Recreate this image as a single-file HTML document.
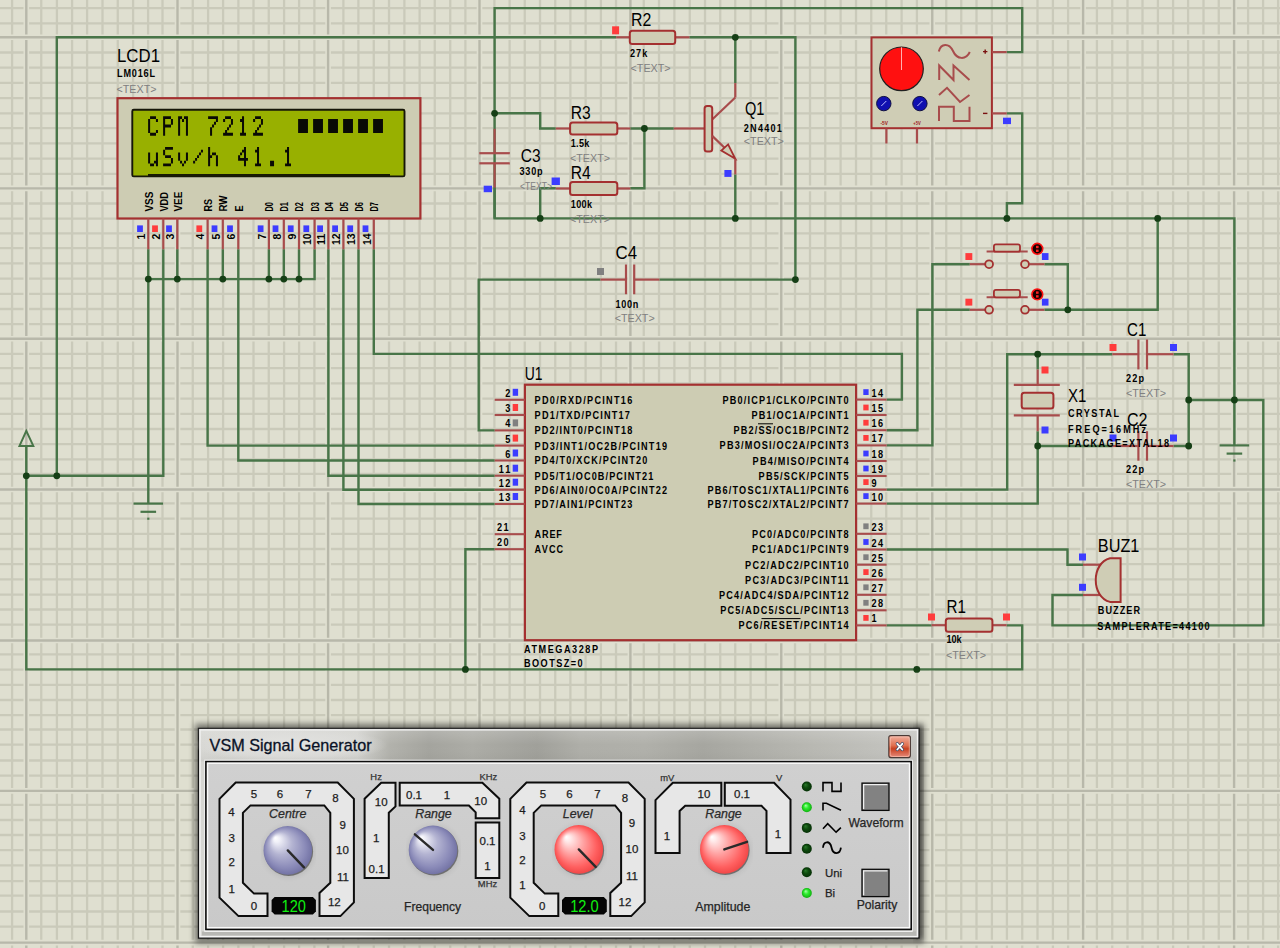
<!DOCTYPE html><html><head><meta charset="utf-8"><title>Proteus schematic</title><style>html,body{margin:0;padding:0;background:#dfdfd0;}body{width:1280px;height:948px;overflow:hidden;}svg{display:block;font-family:"Liberation Sans", sans-serif;}</style></head><body>
<svg width="1280" height="948" viewBox="0 0 1280 948">
<rect width="1280" height="948" fill="#dfdfd0"/>
<path d="M12.1,0V948M41.25,0V948M56.9,0V948M72.1,0V948M87.1,0V948M102.5,0V948M117.75,0V948M133.1,0V948M148.1,0V948M162.5,0V948M192.75,0V948M208.1,0V948M223.1,0V948M238.4,0V948M253.5,0V948M268.75,0V948M284.1,0V948M299.1,0V948M314.4,0V948M343.4,0V948M358.4,0V948M373.75,0V948M389,0V948M404.4,0V948M419.6,0V948M434.75,0V948M450.25,0V948M465.4,0V948M494.4,0V948M509.6,0V948M524.75,0V948M540,0V948M555.25,0V948M570.4,0V948M585.6,0V948M600.9,0V948M616,0V948M643.75,0V948M659,0V948M674.4,0V948M689.75,0V948M705,0V948M720.25,0V948M735.25,0V948M750.6,0V948M765.9,0V948M795,0V948M810,0V948M825.25,0V948M840.6,0V948M856,0V948M871.25,0V948M886.25,0V948M901.6,0V948M916.9,0V948M946.25,0V948M961.25,0V948M976.5,0V948M991.9,0V948M1006.9,0V948M1022.25,0V948M1037.5,0V948M1052.9,0V948M1068.1,0V948M1096.9,0V948M1112.25,0V948M1127.5,0V948M1142.5,0V948M1157.9,0V948M1173.1,0V948M1188.1,0V948M1203.5,0V948M1218.75,0V948M1248.1,0V948M1263.1,0V948M1278.1,0V948M0,8.2H1280M0,23.4H1280M0,52.5H1280M0,67.7H1280M0,82.9H1280M0,98.1H1280M0,113.3H1280M0,128.2H1280M0,143.4H1280M0,158.6H1280M0,173.8H1280M0,203.5H1280M0,218.7H1280M0,233.3H1280M0,248.2H1280M0,263.4H1280M0,278.6H1280M0,293.8H1280M0,309H1280M0,324.2H1280M0,353.9H1280M0,368.2H1280M0,383.4H1280M0,398.6H1280M0,413.8H1280M0,429H1280M0,444.2H1280M0,459.4H1280M0,473.9H1280M0,503.4H1280M0,518.6H1280M0,533.8H1280M0,549H1280M0,564.2H1280M0,579.4H1280M0,594.6H1280M0,609.5H1280M0,624.7H1280M0,654.4H1280M0,669.6H1280M0,684.8H1280M0,700H1280M0,715.2H1280M0,729.5H1280M0,744.7H1280M0,760.5H1280M0,775.7H1280M0,804.8H1280M0,820H1280M0,835H1280M0,850.2H1280M0,865.3H1280M0,881.2H1280M0,895.7H1280M0,911.5H1280M0,926.7H1280" stroke="#cacaba" stroke-width="2.3" fill="none"/>
<path d="M26.3,0V948M177.5,0V948M328.1,0V948M479.5,0V948M630.4,0V948M781.25,0V948M932.25,0V948M1083.1,0V948M1234.1,0V948" stroke="#dfdfd0" stroke-width="5.6" fill="none"/>
<path d="M26.3,0V948M177.5,0V948M328.1,0V948M479.5,0V948M630.4,0V948M781.25,0V948M932.25,0V948M1083.1,0V948M1234.1,0V948" stroke="#b8b8aa" stroke-width="2.4" fill="none"/>
<path d="M0,37.3H1280M0,188.4H1280M0,338.7H1280M0,489.5H1280M0,640.5H1280M0,790.9H1280M0,942.6H1280" stroke="#dfdfd0" stroke-width="5.6" fill="none"/>
<path d="M0,37.3H1280M0,188.4H1280M0,338.7H1280M0,489.5H1280M0,640.5H1280M0,790.9H1280M0,942.6H1280" stroke="#b8b8aa" stroke-width="2.4" fill="none"/>
<polyline points="494.6,218.4 494.6,8.1 1022.2,8.1 1022.2,52.1 1006.7,52.1" fill="none" stroke="#487548" stroke-width="2.4" stroke-linejoin="miter"/>
<polyline points="56.8,475.8 56.8,37.3 616.2,37.3" fill="none" stroke="#487548" stroke-width="2.4" stroke-linejoin="miter"/>
<polyline points="689.4,37.3 795.4,37.3 795.4,279.6" fill="none" stroke="#487548" stroke-width="2.4" stroke-linejoin="miter"/>
<polyline points="735.3,37.3 735.3,83.1" fill="none" stroke="#487548" stroke-width="2.4" stroke-linejoin="miter"/>
<polyline points="494.6,113.3 540.2,113.3 540.2,128.5 555.8,128.5" fill="none" stroke="#487548" stroke-width="2.4" stroke-linejoin="miter"/>
<polyline points="630.3,128.5 673.8,128.5" fill="none" stroke="#487548" stroke-width="2.4" stroke-linejoin="miter"/>
<polyline points="644.4,128.5 644.4,188.2 630.3,188.2" fill="none" stroke="#487548" stroke-width="2.4" stroke-linejoin="miter"/>
<polyline points="555.8,188.2 540.2,188.2 540.2,218.4" fill="none" stroke="#487548" stroke-width="2.4" stroke-linejoin="miter"/>
<polyline points="735.3,174.4 735.3,218.4" fill="none" stroke="#487548" stroke-width="2.4" stroke-linejoin="miter"/>
<polyline points="494.6,187.6 494.6,218.4 1234.4,218.4 1234.4,445.4" fill="none" stroke="#487548" stroke-width="2.4" stroke-linejoin="miter"/>
<polyline points="1006.7,113.4 1022.2,113.4 1022.2,203.2 1006.9,203.2 1006.9,218.4" fill="none" stroke="#487548" stroke-width="2.4" stroke-linejoin="miter"/>
<polyline points="1157.7,218.4 1157.7,309.8 1044.4,309.8" fill="none" stroke="#487548" stroke-width="2.4" stroke-linejoin="miter"/>
<polyline points="1044.4,264.2 1067.8,264.2 1067.8,309.8" fill="none" stroke="#487548" stroke-width="2.4" stroke-linejoin="miter"/>
<polyline points="969.8,264.2 932.4,264.2 932.4,445.4 886.6,445.4" fill="none" stroke="#487548" stroke-width="2.4" stroke-linejoin="miter"/>
<polyline points="969.8,309.8 917.4,309.8 917.4,430.2 886.6,430.2" fill="none" stroke="#487548" stroke-width="2.4" stroke-linejoin="miter"/>
<polyline points="373.8,249.2 373.8,353.9 901.9,353.9 901.9,399.6 886.6,399.6" fill="none" stroke="#487548" stroke-width="2.4" stroke-linejoin="miter"/>
<polyline points="494.7,430.4 478.7,430.4 478.7,279.6 600.5,279.6" fill="none" stroke="#487548" stroke-width="2.4" stroke-linejoin="miter"/>
<polyline points="659.4,279.6 795.4,279.6" fill="none" stroke="#487548" stroke-width="2.4" stroke-linejoin="miter"/>
<polyline points="148.3,249.2 148.3,503.6" fill="none" stroke="#487548" stroke-width="2.4" stroke-linejoin="miter"/>
<polyline points="163.3,249.2 163.3,475.8 26.3,475.8" fill="none" stroke="#487548" stroke-width="2.4" stroke-linejoin="miter"/>
<polyline points="26.3,446 26.3,669.4 1022.2,669.4 1022.2,625.4 1006.6,625.4" fill="none" stroke="#487548" stroke-width="2.4" stroke-linejoin="miter"/>
<polyline points="177.3,249.2 177.3,279.1" fill="none" stroke="#487548" stroke-width="2.4" stroke-linejoin="miter"/>
<polyline points="148.3,279.1 314.6,279.1 314.6,249.2" fill="none" stroke="#487548" stroke-width="2.4" stroke-linejoin="miter"/>
<polyline points="207.6,249.2 207.6,445.6 494.7,445.6" fill="none" stroke="#487548" stroke-width="2.4" stroke-linejoin="miter"/>
<polyline points="222.8,249.2 222.8,279.1" fill="none" stroke="#487548" stroke-width="2.4" stroke-linejoin="miter"/>
<polyline points="238.3,249.2 238.3,460.5 494.7,460.5" fill="none" stroke="#487548" stroke-width="2.4" stroke-linejoin="miter"/>
<polyline points="268.9,249.2 268.9,279.1" fill="none" stroke="#487548" stroke-width="2.4" stroke-linejoin="miter"/>
<polyline points="283.8,249.2 283.8,279.1" fill="none" stroke="#487548" stroke-width="2.4" stroke-linejoin="miter"/>
<polyline points="299,249.2 299,279.1" fill="none" stroke="#487548" stroke-width="2.4" stroke-linejoin="miter"/>
<polyline points="328.4,249.2 328.4,475.7 494.7,475.7" fill="none" stroke="#487548" stroke-width="2.4" stroke-linejoin="miter"/>
<polyline points="343.4,249.2 343.4,489.7 494.7,489.7" fill="none" stroke="#487548" stroke-width="2.4" stroke-linejoin="miter"/>
<polyline points="358.5,249.2 358.5,504 494.7,504" fill="none" stroke="#487548" stroke-width="2.4" stroke-linejoin="miter"/>
<polyline points="494.7,549.2 465.4,549.2 465.4,669.4" fill="none" stroke="#487548" stroke-width="2.4" stroke-linejoin="miter"/>
<polyline points="886.6,489.6 1007.2,489.6 1007.2,354.2 1112.3,354.2" fill="none" stroke="#487548" stroke-width="2.4" stroke-linejoin="miter"/>
<polyline points="886.6,503.6 1037.7,503.6 1037.7,431.2" fill="none" stroke="#487548" stroke-width="2.4" stroke-linejoin="miter"/>
<polyline points="1037.7,354.2 1037.7,369.4" fill="none" stroke="#487548" stroke-width="2.4" stroke-linejoin="miter"/>
<polyline points="1037.7,446 1112.3,446" fill="none" stroke="#487548" stroke-width="2.4" stroke-linejoin="miter"/>
<polyline points="1173.5,354.2 1188.7,354.2 1188.7,446 1173.5,446" fill="none" stroke="#487548" stroke-width="2.4" stroke-linejoin="miter"/>
<polyline points="1188.7,400 1263.3,400 1263.3,625.4 1052.5,625.4 1052.5,595 1083,595" fill="none" stroke="#487548" stroke-width="2.4" stroke-linejoin="miter"/>
<polyline points="886.6,549.5 1067.5,549.5 1067.5,564.7 1083,564.7" fill="none" stroke="#487548" stroke-width="2.4" stroke-linejoin="miter"/>
<polyline points="886.6,625.4 931.6,625.4" fill="none" stroke="#487548" stroke-width="2.4" stroke-linejoin="miter"/>
<circle cx="735.3" cy="37.3" r="3.4" fill="#163f16"/>
<circle cx="494.6" cy="113.3" r="3.4" fill="#163f16"/>
<circle cx="644.4" cy="128.5" r="3.4" fill="#163f16"/>
<circle cx="540.2" cy="218.4" r="3.4" fill="#163f16"/>
<circle cx="735.3" cy="218.4" r="3.4" fill="#163f16"/>
<circle cx="795.4" cy="279.6" r="3.4" fill="#163f16"/>
<circle cx="1006.9" cy="218.4" r="3.4" fill="#163f16"/>
<circle cx="1157.7" cy="218.4" r="3.4" fill="#163f16"/>
<circle cx="1067.8" cy="309.8" r="3.4" fill="#163f16"/>
<circle cx="148.3" cy="279.1" r="3.4" fill="#163f16"/>
<circle cx="177.3" cy="279.1" r="3.4" fill="#163f16"/>
<circle cx="222.8" cy="279.1" r="3.4" fill="#163f16"/>
<circle cx="268.9" cy="279.1" r="3.4" fill="#163f16"/>
<circle cx="283.8" cy="279.1" r="3.4" fill="#163f16"/>
<circle cx="299" cy="279.1" r="3.4" fill="#163f16"/>
<circle cx="26.3" cy="475.8" r="3.4" fill="#163f16"/>
<circle cx="56.8" cy="475.8" r="3.4" fill="#163f16"/>
<circle cx="465.4" cy="669.4" r="3.4" fill="#163f16"/>
<circle cx="916.8" cy="669.4" r="3.4" fill="#163f16"/>
<circle cx="1037.7" cy="354.2" r="3.4" fill="#163f16"/>
<circle cx="1037.7" cy="446" r="3.4" fill="#163f16"/>
<circle cx="1188.7" cy="400" r="3.4" fill="#163f16"/>
<circle cx="1188.7" cy="446" r="3.4" fill="#163f16"/>
<circle cx="1234.4" cy="400" r="3.4" fill="#163f16"/>
<line x1="616.2" y1="37.3" x2="629.8" y2="37.3" stroke="#a84c4c" stroke-width="2.2"/>
<line x1="675.2" y1="37.3" x2="689.4" y2="37.3" stroke="#a84c4c" stroke-width="2.2"/>
<rect x="629.8" y="30.7" width="45.4" height="13.2" rx="2.5" fill="#cfcdb5" stroke="#a43030" stroke-width="2"/>
<line x1="555.8" y1="128.5" x2="570.1" y2="128.5" stroke="#a84c4c" stroke-width="2.2"/>
<line x1="617.3" y1="128.5" x2="630.3" y2="128.5" stroke="#a84c4c" stroke-width="2.2"/>
<rect x="570.1" y="122.6" width="47.2" height="11.8" rx="2.5" fill="#cfcdb5" stroke="#a43030" stroke-width="2"/>
<line x1="555.8" y1="188.5" x2="570.1" y2="188.5" stroke="#a84c4c" stroke-width="2.2"/>
<line x1="617.3" y1="188.5" x2="630.3" y2="188.5" stroke="#a84c4c" stroke-width="2.2"/>
<rect x="570.1" y="182.1" width="47.2" height="12.8" rx="2.5" fill="#cfcdb5" stroke="#a43030" stroke-width="2"/>
<line x1="931.6" y1="625.2" x2="945.8" y2="625.2" stroke="#a84c4c" stroke-width="2.2"/>
<line x1="992.4" y1="625.2" x2="1006.6" y2="625.2" stroke="#a84c4c" stroke-width="2.2"/>
<rect x="945.8" y="618.6" width="46.6" height="13.2" rx="2.5" fill="#cfcdb5" stroke="#a43030" stroke-width="2"/>
<line x1="494.6" y1="128.8" x2="494.6" y2="153.2" stroke="#a84c4c" stroke-width="2.2"/>
<line x1="494.6" y1="163.3" x2="494.6" y2="187.6" stroke="#a84c4c" stroke-width="2.2"/>
<line x1="479.3" y1="153.2" x2="509.8" y2="153.2" stroke="#a84c4c" stroke-width="2.2"/>
<line x1="479.3" y1="163.3" x2="509.8" y2="163.3" stroke="#a84c4c" stroke-width="2.2"/>
<line x1="600.5" y1="279.6" x2="626" y2="279.6" stroke="#a84c4c" stroke-width="2.2"/>
<line x1="634.2" y1="279.6" x2="659.4" y2="279.6" stroke="#a84c4c" stroke-width="2.2"/>
<line x1="626" y1="264.5" x2="626" y2="294.2" stroke="#a84c4c" stroke-width="2.2"/>
<line x1="634.2" y1="264.5" x2="634.2" y2="294.2" stroke="#a84c4c" stroke-width="2.2"/>
<line x1="1112.3" y1="354.2" x2="1138.4" y2="354.2" stroke="#a84c4c" stroke-width="2.2"/>
<line x1="1147" y1="354.2" x2="1173.5" y2="354.2" stroke="#a84c4c" stroke-width="2.2"/>
<line x1="1138.4" y1="339.5" x2="1138.4" y2="369.4" stroke="#a84c4c" stroke-width="2.2"/>
<line x1="1147" y1="339.5" x2="1147" y2="369.4" stroke="#a84c4c" stroke-width="2.2"/>
<line x1="1112.3" y1="446" x2="1138.4" y2="446" stroke="#a84c4c" stroke-width="2.2"/>
<line x1="1147" y1="446" x2="1173.5" y2="446" stroke="#a84c4c" stroke-width="2.2"/>
<line x1="1138.4" y1="431.2" x2="1138.4" y2="460.7" stroke="#a84c4c" stroke-width="2.2"/>
<line x1="1147" y1="431.2" x2="1147" y2="460.7" stroke="#a84c4c" stroke-width="2.2"/>
<line x1="1037.7" y1="369.4" x2="1037.7" y2="384.8" stroke="#a84c4c" stroke-width="2.2"/>
<line x1="1013.8" y1="384.8" x2="1059.8" y2="384.8" stroke="#a84c4c" stroke-width="2.2"/>
<rect x="1021.7" y="392.7" width="31.7" height="15.8" rx="2.5" fill="#cfcdb5" stroke="#a43030" stroke-width="2"/>
<line x1="1013.8" y1="415.3" x2="1059.8" y2="415.3" stroke="#a84c4c" stroke-width="2.2"/>
<line x1="1037.7" y1="415.3" x2="1037.7" y2="431.2" stroke="#a84c4c" stroke-width="2.2"/>
<line x1="735.3" y1="83.1" x2="735.3" y2="97.5" stroke="#a84c4c" stroke-width="2.2"/>
<line x1="735.3" y1="97.5" x2="711.9" y2="119.8" stroke="#a84c4c" stroke-width="2.2"/>
<line x1="673.8" y1="128.5" x2="704.6" y2="128.5" stroke="#a84c4c" stroke-width="2.2"/>
<rect x="704.6" y="106" width="7.6" height="45.5" rx="2.5" fill="#cfcdb5" stroke="#a43030" stroke-width="2"/>
<line x1="712.2" y1="135.9" x2="730.5" y2="153.5" stroke="#a84c4c" stroke-width="2.2"/>
<polygon points="735.3,158.8 721.3,150.6 728.1,144.4" fill="#cfcdb5" stroke="#a43030" stroke-width="1.8" stroke-linejoin="miter"/>
<line x1="735.3" y1="158.8" x2="735.3" y2="174.4" stroke="#a84c4c" stroke-width="2.2"/>
<line x1="969.8" y1="264.2" x2="985" y2="264.2" stroke="#a84c4c" stroke-width="2.2"/>
<line x1="1029.2" y1="264.2" x2="1044.4" y2="264.2" stroke="#a84c4c" stroke-width="2.2"/>
<circle cx="989.1" cy="264.2" r="3.9" fill="#cfcdb5" stroke="#a43030" stroke-width="1.8"/>
<circle cx="1025.0" cy="264.2" r="3.9" fill="#cfcdb5" stroke="#a43030" stroke-width="1.8"/>
<line x1="986.6" y1="251.6" x2="1027.7" y2="251.6" stroke="#a84c4c" stroke-width="2"/>
<rect x="993.9" y="244.3" width="26.1" height="7.4" rx="2" fill="#cfcdb5" stroke="#a43030" stroke-width="1.8"/>
<circle cx="1037.3" cy="248.8" r="5.4" fill="#1a0000" stroke="#ff1010" stroke-width="1.6"/>
<rect x="1036" y="245.8" width="2.6" height="2.4" fill="#ff2020"/>
<rect x="1036" y="249.6" width="2.6" height="2.4" fill="#ff2020"/>
<line x1="969.8" y1="309.8" x2="985" y2="309.8" stroke="#a84c4c" stroke-width="2.2"/>
<line x1="1029.2" y1="309.8" x2="1044.4" y2="309.8" stroke="#a84c4c" stroke-width="2.2"/>
<circle cx="989.1" cy="309.8" r="3.9" fill="#cfcdb5" stroke="#a43030" stroke-width="1.8"/>
<circle cx="1025.0" cy="309.8" r="3.9" fill="#cfcdb5" stroke="#a43030" stroke-width="1.8"/>
<line x1="986.6" y1="297.2" x2="1027.7" y2="297.2" stroke="#a84c4c" stroke-width="2"/>
<rect x="993.9" y="289.9" width="26.1" height="7.4" rx="2" fill="#cfcdb5" stroke="#a43030" stroke-width="1.8"/>
<circle cx="1037.3" cy="294.4" r="5.4" fill="#1a0000" stroke="#ff1010" stroke-width="1.6"/>
<rect x="1036" y="291.4" width="2.6" height="2.4" fill="#ff2020"/>
<rect x="1036" y="295.2" width="2.6" height="2.4" fill="#ff2020"/>
<line x1="133.5" y1="503.6" x2="163.1" y2="503.6" stroke="#487548" stroke-width="2.2"/>
<line x1="140.5" y1="511.8" x2="156.1" y2="511.8" stroke="#487548" stroke-width="2.2"/>
<rect x="147.2" y="517.6" width="2.2" height="2.2" fill="#487548"/>
<line x1="1219.6" y1="445.4" x2="1249.2" y2="445.4" stroke="#487548" stroke-width="2.2"/>
<line x1="1226.6" y1="453.6" x2="1242.2" y2="453.6" stroke="#487548" stroke-width="2.2"/>
<rect x="1233.3" y="459.4" width="2.2" height="2.2" fill="#487548"/>
<polygon points="26.3,430.8 19.5,445.9 33.3,445.9" fill="none" stroke="#487548" stroke-width="2"/>
<rect x="871.5" y="37.4" width="120.4" height="90.8" fill="#cfcdb5" stroke="#a43030" stroke-width="2"/>
<line x1="992" y1="52.1" x2="1006.7" y2="52.1" stroke="#a84c4c" stroke-width="2.2"/>
<line x1="992" y1="113.4" x2="1006.7" y2="113.4" stroke="#a84c4c" stroke-width="2.2"/>
<line x1="886.4" y1="128.6" x2="886.4" y2="143.5" stroke="#a84c4c" stroke-width="2.2"/>
<line x1="917" y1="128.6" x2="917" y2="143.5" stroke="#a84c4c" stroke-width="2.2"/>
<circle cx="901.5" cy="68.8" r="21.8" fill="#ff1010" stroke="#202020" stroke-width="1.2"/>
<line x1="901.5" y1="47.3" x2="901.5" y2="70" stroke="#ffb0b0" stroke-width="1"/>
<circle cx="883.8" cy="103.6" r="7.2" fill="#1010b0" stroke="#101040" stroke-width="1"/>
<line x1="881.3" y1="106" x2="886.3" y2="101" stroke="#c0c0ff" stroke-width="1"/>
<circle cx="919.9" cy="103.6" r="7.2" fill="#1010b0" stroke="#101040" stroke-width="1"/>
<line x1="917.4" y1="106" x2="922.4" y2="101" stroke="#c0c0ff" stroke-width="1"/>
<path d="M938.8,51.5 C941,43 949,43 953,51 C957,60 966,60 969.8,52" fill="none" stroke="#a84c4c" stroke-width="2"/>
<path d="M939.2,80 L939.2,65.5 L953.5,80 L953.5,65.5 L969.5,80" fill="none" stroke="#a84c4c" stroke-width="2"/>
<path d="M939,95 L947,87.8 L960,102 L969.5,95" fill="none" stroke="#a84c4c" stroke-width="2"/>
<path d="M939,121 L939,106.8 L953.8,106.8 L953.8,121 L969.5,121 L969.5,106.8" fill="none" stroke="#a84c4c" stroke-width="2"/>
<path d="M983,51.6 h4.4 M985.2,49.4 v4.4" stroke="#7a1010" stroke-width="1.4"/>
<path d="M983,113.4 h4.4" stroke="#7a1010" stroke-width="1.4"/>
<text x="884.2" y="124.5" font-size="6" fill="#a02020" font-weight="bold" text-anchor="middle" textLength="7.5" lengthAdjust="spacingAndGlyphs">-5V</text>
<text x="917" y="124.5" font-size="6" fill="#a02020" font-weight="bold" text-anchor="middle" textLength="7.5" lengthAdjust="spacingAndGlyphs">+5V</text>
<line x1="1083" y1="564.7" x2="1101.9" y2="564.7" stroke="#a84c4c" stroke-width="2.2"/>
<line x1="1083" y1="595" x2="1101.9" y2="595" stroke="#a84c4c" stroke-width="2.2"/>
<path d="M1120.6,558.2 L1120.6,601.9 L1110,601.9 C1091,597 1091,563 1110,558.2 Z" fill="#cfcdb5" stroke="#a43030" stroke-width="2"/>
<text x="631" y="26.2" font-size="18.6" fill="#000" font-weight="normal" text-anchor="start" textLength="20.3" lengthAdjust="spacingAndGlyphs">R2</text>
<text transform="translate(630,57.1) scale(0.86,1)" font-size="10.6" font-weight="bold" fill="#000" text-anchor="start" textLength="20.12" lengthAdjust="spacing">27k</text>
<text x="630.6" y="71.9" font-size="11" fill="#808080" font-weight="normal" text-anchor="start" textLength="40" lengthAdjust="spacingAndGlyphs">&lt;TEXT&gt;</text>
<rect x="612.1" y="26.3" width="7" height="8" fill="#ff3c3c"/>
<text x="570.8" y="119.1" font-size="18.6" fill="#000" font-weight="normal" text-anchor="start" textLength="20" lengthAdjust="spacingAndGlyphs">R3</text>
<text transform="translate(570.8,146.7) scale(0.86,1)" font-size="10.6" font-weight="bold" fill="#000" text-anchor="start" textLength="21.51" lengthAdjust="spacing">1.5k</text>
<text x="570" y="162.3" font-size="11" fill="#808080" font-weight="normal" text-anchor="start" textLength="40" lengthAdjust="spacingAndGlyphs">&lt;TEXT&gt;</text>
<text x="570.8" y="178.6" font-size="18.6" fill="#000" font-weight="normal" text-anchor="start" textLength="20" lengthAdjust="spacingAndGlyphs">R4</text>
<text transform="translate(570.8,207.8) scale(0.86,1)" font-size="10.6" font-weight="bold" fill="#000" text-anchor="start" textLength="24.65" lengthAdjust="spacing">100k</text>
<text x="570" y="222.7" font-size="11" fill="#808080" font-weight="normal" text-anchor="start" textLength="40" lengthAdjust="spacingAndGlyphs">&lt;TEXT&gt;</text>
<rect x="551.6" y="177.5" width="8.3" height="7.5" fill="#3c3cff"/>
<text x="520.8" y="161.6" font-size="18.6" fill="#000" font-weight="normal" text-anchor="start" textLength="19.8" lengthAdjust="spacingAndGlyphs">C3</text>
<text transform="translate(519.4,174.9) scale(0.86,1)" font-size="10.6" font-weight="bold" fill="#000" text-anchor="start" textLength="27.09" lengthAdjust="spacing">330p</text>
<text x="520" y="190.4" font-size="11" fill="#808080" font-weight="normal" text-anchor="start" textLength="32" lengthAdjust="spacingAndGlyphs">&lt;TEXT&gt;</text>
<rect x="483.7" y="185.7" width="8.3" height="6.5" fill="#3c3cff"/>
<text x="745" y="114.9" font-size="18.6" fill="#000" font-weight="normal" text-anchor="start" textLength="19.4" lengthAdjust="spacingAndGlyphs">Q1</text>
<text transform="translate(743.8,131.5) scale(0.86,1)" font-size="10.6" font-weight="bold" fill="#000" text-anchor="start" textLength="44.3" lengthAdjust="spacing">2N4401</text>
<text x="743.8" y="145" font-size="11" fill="#808080" font-weight="normal" text-anchor="start" textLength="40" lengthAdjust="spacingAndGlyphs">&lt;TEXT&gt;</text>
<rect x="724.4" y="170" width="7.1" height="6.9" fill="#3c3cff"/>
<text x="615.5" y="259" font-size="18.6" fill="#000" font-weight="normal" text-anchor="start" textLength="21.5" lengthAdjust="spacingAndGlyphs">C4</text>
<text transform="translate(615.5,307.7) scale(0.86,1)" font-size="10.6" font-weight="bold" fill="#000" text-anchor="start" textLength="26.51" lengthAdjust="spacing">100n</text>
<text x="614.7" y="322.1" font-size="11" fill="#808080" font-weight="normal" text-anchor="start" textLength="40" lengthAdjust="spacingAndGlyphs">&lt;TEXT&gt;</text>
<rect x="597" y="268" width="7" height="7" fill="#808080"/>
<text x="524.7" y="379.6" font-size="18.6" fill="#000" font-weight="normal" text-anchor="start" textLength="17.8" lengthAdjust="spacingAndGlyphs">U1</text>
<text transform="translate(524,652.5) scale(0.86,1)" font-size="10.6" font-weight="bold" fill="#000" text-anchor="start" textLength="86.05" lengthAdjust="spacing">ATMEGA328P</text>
<text transform="translate(524,667.3) scale(0.86,1)" font-size="10.6" font-weight="bold" fill="#000" text-anchor="start" textLength="68.14" lengthAdjust="spacing">BOOTSZ=0</text>
<text x="117" y="62.2" font-size="18.6" fill="#000" font-weight="normal" text-anchor="start" textLength="43" lengthAdjust="spacingAndGlyphs">LCD1</text>
<text transform="translate(117,77.3) scale(0.86,1)" font-size="10.6" font-weight="bold" fill="#000" text-anchor="start" textLength="44.19" lengthAdjust="spacing">LM016L</text>
<text x="116.5" y="92.9" font-size="11" fill="#808080" font-weight="normal" text-anchor="start" textLength="40" lengthAdjust="spacingAndGlyphs">&lt;TEXT&gt;</text>
<text x="1127" y="336.1" font-size="18.6" fill="#000" font-weight="normal" text-anchor="start" textLength="19.3" lengthAdjust="spacingAndGlyphs">C1</text>
<text transform="translate(1126,382.3) scale(0.86,1)" font-size="10.6" font-weight="bold" fill="#000" text-anchor="start" textLength="20.93" lengthAdjust="spacing">22p</text>
<text x="1126" y="397.4" font-size="11" fill="#808080" font-weight="normal" text-anchor="start" textLength="40" lengthAdjust="spacingAndGlyphs">&lt;TEXT&gt;</text>
<rect x="1109.5" y="344" width="7" height="7" fill="#ff3c3c"/>
<rect x="1170" y="344" width="7" height="7" fill="#3c3cff"/>
<text x="1127" y="425.6" font-size="18.6" fill="#000" font-weight="normal" text-anchor="start" textLength="20.5" lengthAdjust="spacingAndGlyphs">C2</text>
<text transform="translate(1126,472.7) scale(0.86,1)" font-size="10.6" font-weight="bold" fill="#000" text-anchor="start" textLength="20.93" lengthAdjust="spacing">22p</text>
<text x="1126" y="488.1" font-size="11" fill="#808080" font-weight="normal" text-anchor="start" textLength="40" lengthAdjust="spacingAndGlyphs">&lt;TEXT&gt;</text>
<rect x="1109.5" y="434.5" width="7" height="7" fill="#3c3cff"/>
<rect x="1170" y="434.5" width="7" height="7" fill="#3c3cff"/>
<text x="1068" y="401.6" font-size="18.6" fill="#000" font-weight="normal" text-anchor="start" textLength="18.3" lengthAdjust="spacingAndGlyphs">X1</text>
<text transform="translate(1068,417.4) scale(0.86,1)" font-size="10.6" font-weight="bold" fill="#000" text-anchor="start" textLength="59.3" lengthAdjust="spacing">CRYSTAL</text>
<text transform="translate(1068,433.2) scale(0.86,1)" font-size="10.6" font-weight="bold" fill="#000" text-anchor="start" textLength="90.7" lengthAdjust="spacing">FREQ=16MHz</text>
<text transform="translate(1068,446.7) scale(0.86,1)" font-size="10.6" font-weight="bold" fill="#000" text-anchor="start" textLength="117.44" lengthAdjust="spacing">PACKAGE=XTAL18</text>
<rect x="1041.5" y="366.5" width="7" height="7" fill="#ff3c3c"/>
<rect x="1041.5" y="426.5" width="7" height="7" fill="#3c3cff"/>
<text x="1097.8" y="552.4" font-size="18.6" fill="#000" font-weight="normal" text-anchor="start" textLength="41.6" lengthAdjust="spacingAndGlyphs">BUZ1</text>
<text transform="translate(1097.8,614.3) scale(0.86,1)" font-size="10.6" font-weight="bold" fill="#000" text-anchor="start" textLength="49.07" lengthAdjust="spacing">BUZZER</text>
<text transform="translate(1097.2,629.7) scale(0.86,1)" font-size="10.6" font-weight="bold" fill="#000" text-anchor="start" textLength="130.81" lengthAdjust="spacing">SAMPLERATE=44100</text>
<rect x="1079" y="553.5" width="7" height="7" fill="#3c3cff"/>
<rect x="1079" y="583.8" width="7" height="7" fill="#3c3cff"/>
<text x="946.6" y="613.3" font-size="18.6" fill="#000" font-weight="normal" text-anchor="start" textLength="19.4" lengthAdjust="spacingAndGlyphs">R1</text>
<text transform="translate(946.6,643.3) scale(0.86,1)" font-size="10.6" font-weight="bold" fill="#000" text-anchor="start" textLength="17.44" lengthAdjust="spacing">10k</text>
<text x="946" y="659.1" font-size="11" fill="#808080" font-weight="normal" text-anchor="start" textLength="40" lengthAdjust="spacingAndGlyphs">&lt;TEXT&gt;</text>
<rect x="928" y="613.5" width="7" height="7" fill="#ff3c3c"/>
<rect x="1003" y="613.5" width="7" height="7" fill="#ff3c3c"/>
<rect x="965.4" y="253.1" width="6.9" height="6.9" fill="#ff3c3c"/>
<rect x="1041.9" y="253.1" width="6.6" height="6.9" fill="#3c3cff"/>
<rect x="965.4" y="298.7" width="6.9" height="6.9" fill="#ff3c3c"/>
<rect x="1041.9" y="298.7" width="6.6" height="6.9" fill="#3c3cff"/>
<rect x="1003" y="117.7" width="8" height="6.4" fill="#3c3cff"/>
<rect x="117.5" y="98.2" width="302.9" height="120.3" fill="#cdccb3" stroke="#a43030" stroke-width="2.2"/>
<rect x="132.3" y="109.8" width="272.2" height="66.6" rx="1.5" fill="#98b000" stroke="#161608" stroke-width="1.9"/>
<rect x="148" y="174.1" width="242" height="1.7" fill="#0a0a05"/>
<path d="M150.06,116.3h2.02v2.82h-2.02zM152.02,116.3h2.02v2.82h-2.02zM153.98,116.3h2.02v2.82h-2.02zM148.1,119.06h2.02v2.82h-2.02zM155.94,119.06h2.02v2.82h-2.02zM148.1,121.82h2.02v2.82h-2.02zM148.1,124.58h2.02v2.82h-2.02zM148.1,127.34h2.02v2.82h-2.02zM148.1,130.1h2.02v2.82h-2.02zM155.94,130.1h2.02v2.82h-2.02zM150.06,132.86h2.02v2.82h-2.02zM152.02,132.86h2.02v2.82h-2.02zM153.98,132.86h2.02v2.82h-2.02zM163.1,116.3h2.02v2.82h-2.02zM165.06,116.3h2.02v2.82h-2.02zM167.02,116.3h2.02v2.82h-2.02zM168.98,116.3h2.02v2.82h-2.02zM163.1,119.06h2.02v2.82h-2.02zM170.94,119.06h2.02v2.82h-2.02zM163.1,121.82h2.02v2.82h-2.02zM170.94,121.82h2.02v2.82h-2.02zM163.1,124.58h2.02v2.82h-2.02zM165.06,124.58h2.02v2.82h-2.02zM167.02,124.58h2.02v2.82h-2.02zM168.98,124.58h2.02v2.82h-2.02zM163.1,127.34h2.02v2.82h-2.02zM163.1,130.1h2.02v2.82h-2.02zM163.1,132.86h2.02v2.82h-2.02zM178.1,116.3h2.02v2.82h-2.02zM180.06,116.3h2.02v2.82h-2.02zM183.98,116.3h2.02v2.82h-2.02zM185.94,116.3h2.02v2.82h-2.02zM178.1,119.06h2.02v2.82h-2.02zM182.02,119.06h2.02v2.82h-2.02zM185.94,119.06h2.02v2.82h-2.02zM178.1,121.82h2.02v2.82h-2.02zM185.94,121.82h2.02v2.82h-2.02zM178.1,124.58h2.02v2.82h-2.02zM185.94,124.58h2.02v2.82h-2.02zM178.1,127.34h2.02v2.82h-2.02zM185.94,127.34h2.02v2.82h-2.02zM178.1,130.1h2.02v2.82h-2.02zM185.94,130.1h2.02v2.82h-2.02zM178.1,132.86h2.02v2.82h-2.02zM185.94,132.86h2.02v2.82h-2.02zM208.1,116.3h2.02v2.82h-2.02zM210.06,116.3h2.02v2.82h-2.02zM212.02,116.3h2.02v2.82h-2.02zM213.98,116.3h2.02v2.82h-2.02zM215.94,116.3h2.02v2.82h-2.02zM215.94,119.06h2.02v2.82h-2.02zM213.98,121.82h2.02v2.82h-2.02zM212.02,124.58h2.02v2.82h-2.02zM210.06,127.34h2.02v2.82h-2.02zM210.06,130.1h2.02v2.82h-2.02zM210.06,132.86h2.02v2.82h-2.02zM225.06,116.3h2.02v2.82h-2.02zM227.02,116.3h2.02v2.82h-2.02zM228.98,116.3h2.02v2.82h-2.02zM223.1,119.06h2.02v2.82h-2.02zM230.94,119.06h2.02v2.82h-2.02zM230.94,121.82h2.02v2.82h-2.02zM228.98,124.58h2.02v2.82h-2.02zM227.02,127.34h2.02v2.82h-2.02zM225.06,130.1h2.02v2.82h-2.02zM223.1,132.86h2.02v2.82h-2.02zM225.06,132.86h2.02v2.82h-2.02zM227.02,132.86h2.02v2.82h-2.02zM228.98,132.86h2.02v2.82h-2.02zM230.94,132.86h2.02v2.82h-2.02zM242.02,116.3h2.02v2.82h-2.02zM240.06,119.06h2.02v2.82h-2.02zM242.02,119.06h2.02v2.82h-2.02zM242.02,121.82h2.02v2.82h-2.02zM242.02,124.58h2.02v2.82h-2.02zM242.02,127.34h2.02v2.82h-2.02zM242.02,130.1h2.02v2.82h-2.02zM240.06,132.86h2.02v2.82h-2.02zM242.02,132.86h2.02v2.82h-2.02zM243.98,132.86h2.02v2.82h-2.02zM255.06,116.3h2.02v2.82h-2.02zM257.02,116.3h2.02v2.82h-2.02zM258.98,116.3h2.02v2.82h-2.02zM253.1,119.06h2.02v2.82h-2.02zM260.94,119.06h2.02v2.82h-2.02zM260.94,121.82h2.02v2.82h-2.02zM258.98,124.58h2.02v2.82h-2.02zM257.02,127.34h2.02v2.82h-2.02zM255.06,130.1h2.02v2.82h-2.02zM253.1,132.86h2.02v2.82h-2.02zM255.06,132.86h2.02v2.82h-2.02zM257.02,132.86h2.02v2.82h-2.02zM258.98,132.86h2.02v2.82h-2.02zM260.94,132.86h2.02v2.82h-2.02zM298.1,119.06h2.02v2.82h-2.02zM300.06,119.06h2.02v2.82h-2.02zM302.02,119.06h2.02v2.82h-2.02zM303.98,119.06h2.02v2.82h-2.02zM305.94,119.06h2.02v2.82h-2.02zM298.1,121.82h2.02v2.82h-2.02zM300.06,121.82h2.02v2.82h-2.02zM302.02,121.82h2.02v2.82h-2.02zM303.98,121.82h2.02v2.82h-2.02zM305.94,121.82h2.02v2.82h-2.02zM298.1,124.58h2.02v2.82h-2.02zM300.06,124.58h2.02v2.82h-2.02zM302.02,124.58h2.02v2.82h-2.02zM303.98,124.58h2.02v2.82h-2.02zM305.94,124.58h2.02v2.82h-2.02zM298.1,127.34h2.02v2.82h-2.02zM300.06,127.34h2.02v2.82h-2.02zM302.02,127.34h2.02v2.82h-2.02zM303.98,127.34h2.02v2.82h-2.02zM305.94,127.34h2.02v2.82h-2.02zM298.1,130.1h2.02v2.82h-2.02zM300.06,130.1h2.02v2.82h-2.02zM302.02,130.1h2.02v2.82h-2.02zM303.98,130.1h2.02v2.82h-2.02zM305.94,130.1h2.02v2.82h-2.02zM313.1,119.06h2.02v2.82h-2.02zM315.06,119.06h2.02v2.82h-2.02zM317.02,119.06h2.02v2.82h-2.02zM318.98,119.06h2.02v2.82h-2.02zM320.94,119.06h2.02v2.82h-2.02zM313.1,121.82h2.02v2.82h-2.02zM315.06,121.82h2.02v2.82h-2.02zM317.02,121.82h2.02v2.82h-2.02zM318.98,121.82h2.02v2.82h-2.02zM320.94,121.82h2.02v2.82h-2.02zM313.1,124.58h2.02v2.82h-2.02zM315.06,124.58h2.02v2.82h-2.02zM317.02,124.58h2.02v2.82h-2.02zM318.98,124.58h2.02v2.82h-2.02zM320.94,124.58h2.02v2.82h-2.02zM313.1,127.34h2.02v2.82h-2.02zM315.06,127.34h2.02v2.82h-2.02zM317.02,127.34h2.02v2.82h-2.02zM318.98,127.34h2.02v2.82h-2.02zM320.94,127.34h2.02v2.82h-2.02zM313.1,130.1h2.02v2.82h-2.02zM315.06,130.1h2.02v2.82h-2.02zM317.02,130.1h2.02v2.82h-2.02zM318.98,130.1h2.02v2.82h-2.02zM320.94,130.1h2.02v2.82h-2.02zM328.1,119.06h2.02v2.82h-2.02zM330.06,119.06h2.02v2.82h-2.02zM332.02,119.06h2.02v2.82h-2.02zM333.98,119.06h2.02v2.82h-2.02zM335.94,119.06h2.02v2.82h-2.02zM328.1,121.82h2.02v2.82h-2.02zM330.06,121.82h2.02v2.82h-2.02zM332.02,121.82h2.02v2.82h-2.02zM333.98,121.82h2.02v2.82h-2.02zM335.94,121.82h2.02v2.82h-2.02zM328.1,124.58h2.02v2.82h-2.02zM330.06,124.58h2.02v2.82h-2.02zM332.02,124.58h2.02v2.82h-2.02zM333.98,124.58h2.02v2.82h-2.02zM335.94,124.58h2.02v2.82h-2.02zM328.1,127.34h2.02v2.82h-2.02zM330.06,127.34h2.02v2.82h-2.02zM332.02,127.34h2.02v2.82h-2.02zM333.98,127.34h2.02v2.82h-2.02zM335.94,127.34h2.02v2.82h-2.02zM328.1,130.1h2.02v2.82h-2.02zM330.06,130.1h2.02v2.82h-2.02zM332.02,130.1h2.02v2.82h-2.02zM333.98,130.1h2.02v2.82h-2.02zM335.94,130.1h2.02v2.82h-2.02zM343.1,119.06h2.02v2.82h-2.02zM345.06,119.06h2.02v2.82h-2.02zM347.02,119.06h2.02v2.82h-2.02zM348.98,119.06h2.02v2.82h-2.02zM350.94,119.06h2.02v2.82h-2.02zM343.1,121.82h2.02v2.82h-2.02zM345.06,121.82h2.02v2.82h-2.02zM347.02,121.82h2.02v2.82h-2.02zM348.98,121.82h2.02v2.82h-2.02zM350.94,121.82h2.02v2.82h-2.02zM343.1,124.58h2.02v2.82h-2.02zM345.06,124.58h2.02v2.82h-2.02zM347.02,124.58h2.02v2.82h-2.02zM348.98,124.58h2.02v2.82h-2.02zM350.94,124.58h2.02v2.82h-2.02zM343.1,127.34h2.02v2.82h-2.02zM345.06,127.34h2.02v2.82h-2.02zM347.02,127.34h2.02v2.82h-2.02zM348.98,127.34h2.02v2.82h-2.02zM350.94,127.34h2.02v2.82h-2.02zM343.1,130.1h2.02v2.82h-2.02zM345.06,130.1h2.02v2.82h-2.02zM347.02,130.1h2.02v2.82h-2.02zM348.98,130.1h2.02v2.82h-2.02zM350.94,130.1h2.02v2.82h-2.02zM358.1,119.06h2.02v2.82h-2.02zM360.06,119.06h2.02v2.82h-2.02zM362.02,119.06h2.02v2.82h-2.02zM363.98,119.06h2.02v2.82h-2.02zM365.94,119.06h2.02v2.82h-2.02zM358.1,121.82h2.02v2.82h-2.02zM360.06,121.82h2.02v2.82h-2.02zM362.02,121.82h2.02v2.82h-2.02zM363.98,121.82h2.02v2.82h-2.02zM365.94,121.82h2.02v2.82h-2.02zM358.1,124.58h2.02v2.82h-2.02zM360.06,124.58h2.02v2.82h-2.02zM362.02,124.58h2.02v2.82h-2.02zM363.98,124.58h2.02v2.82h-2.02zM365.94,124.58h2.02v2.82h-2.02zM358.1,127.34h2.02v2.82h-2.02zM360.06,127.34h2.02v2.82h-2.02zM362.02,127.34h2.02v2.82h-2.02zM363.98,127.34h2.02v2.82h-2.02zM365.94,127.34h2.02v2.82h-2.02zM358.1,130.1h2.02v2.82h-2.02zM360.06,130.1h2.02v2.82h-2.02zM362.02,130.1h2.02v2.82h-2.02zM363.98,130.1h2.02v2.82h-2.02zM365.94,130.1h2.02v2.82h-2.02zM373.1,119.06h2.02v2.82h-2.02zM375.06,119.06h2.02v2.82h-2.02zM377.02,119.06h2.02v2.82h-2.02zM378.98,119.06h2.02v2.82h-2.02zM380.94,119.06h2.02v2.82h-2.02zM373.1,121.82h2.02v2.82h-2.02zM375.06,121.82h2.02v2.82h-2.02zM377.02,121.82h2.02v2.82h-2.02zM378.98,121.82h2.02v2.82h-2.02zM380.94,121.82h2.02v2.82h-2.02zM373.1,124.58h2.02v2.82h-2.02zM375.06,124.58h2.02v2.82h-2.02zM377.02,124.58h2.02v2.82h-2.02zM378.98,124.58h2.02v2.82h-2.02zM380.94,124.58h2.02v2.82h-2.02zM373.1,127.34h2.02v2.82h-2.02zM375.06,127.34h2.02v2.82h-2.02zM377.02,127.34h2.02v2.82h-2.02zM378.98,127.34h2.02v2.82h-2.02zM380.94,127.34h2.02v2.82h-2.02zM373.1,130.1h2.02v2.82h-2.02zM375.06,130.1h2.02v2.82h-2.02zM377.02,130.1h2.02v2.82h-2.02zM378.98,130.1h2.02v2.82h-2.02zM380.94,130.1h2.02v2.82h-2.02zM148.1,152.42h2.02v2.82h-2.02zM155.94,152.42h2.02v2.82h-2.02zM148.1,155.18h2.02v2.82h-2.02zM155.94,155.18h2.02v2.82h-2.02zM148.1,157.94h2.02v2.82h-2.02zM155.94,157.94h2.02v2.82h-2.02zM148.1,160.7h2.02v2.82h-2.02zM153.98,160.7h2.02v2.82h-2.02zM155.94,160.7h2.02v2.82h-2.02zM150.06,163.46h2.02v2.82h-2.02zM152.02,163.46h2.02v2.82h-2.02zM155.94,163.46h2.02v2.82h-2.02zM165.06,146.9h2.02v2.82h-2.02zM167.02,146.9h2.02v2.82h-2.02zM168.98,146.9h2.02v2.82h-2.02zM170.94,146.9h2.02v2.82h-2.02zM163.1,149.66h2.02v2.82h-2.02zM163.1,152.42h2.02v2.82h-2.02zM165.06,155.18h2.02v2.82h-2.02zM167.02,155.18h2.02v2.82h-2.02zM168.98,155.18h2.02v2.82h-2.02zM170.94,157.94h2.02v2.82h-2.02zM170.94,160.7h2.02v2.82h-2.02zM163.1,163.46h2.02v2.82h-2.02zM165.06,163.46h2.02v2.82h-2.02zM167.02,163.46h2.02v2.82h-2.02zM168.98,163.46h2.02v2.82h-2.02zM178.1,152.42h2.02v2.82h-2.02zM185.94,152.42h2.02v2.82h-2.02zM178.1,155.18h2.02v2.82h-2.02zM185.94,155.18h2.02v2.82h-2.02zM178.1,157.94h2.02v2.82h-2.02zM185.94,157.94h2.02v2.82h-2.02zM180.06,160.7h2.02v2.82h-2.02zM183.98,160.7h2.02v2.82h-2.02zM182.02,163.46h2.02v2.82h-2.02zM200.94,149.66h2.02v2.82h-2.02zM198.98,152.42h2.02v2.82h-2.02zM197.02,155.18h2.02v2.82h-2.02zM195.06,157.94h2.02v2.82h-2.02zM193.1,160.7h2.02v2.82h-2.02zM208.1,146.9h2.02v2.82h-2.02zM208.1,149.66h2.02v2.82h-2.02zM208.1,152.42h2.02v2.82h-2.02zM212.02,152.42h2.02v2.82h-2.02zM213.98,152.42h2.02v2.82h-2.02zM208.1,155.18h2.02v2.82h-2.02zM210.06,155.18h2.02v2.82h-2.02zM215.94,155.18h2.02v2.82h-2.02zM208.1,157.94h2.02v2.82h-2.02zM215.94,157.94h2.02v2.82h-2.02zM208.1,160.7h2.02v2.82h-2.02zM215.94,160.7h2.02v2.82h-2.02zM208.1,163.46h2.02v2.82h-2.02zM215.94,163.46h2.02v2.82h-2.02zM243.98,146.9h2.02v2.82h-2.02zM242.02,149.66h2.02v2.82h-2.02zM243.98,149.66h2.02v2.82h-2.02zM240.06,152.42h2.02v2.82h-2.02zM243.98,152.42h2.02v2.82h-2.02zM238.1,155.18h2.02v2.82h-2.02zM243.98,155.18h2.02v2.82h-2.02zM238.1,157.94h2.02v2.82h-2.02zM240.06,157.94h2.02v2.82h-2.02zM242.02,157.94h2.02v2.82h-2.02zM243.98,157.94h2.02v2.82h-2.02zM245.94,157.94h2.02v2.82h-2.02zM243.98,160.7h2.02v2.82h-2.02zM243.98,163.46h2.02v2.82h-2.02zM257.02,146.9h2.02v2.82h-2.02zM255.06,149.66h2.02v2.82h-2.02zM257.02,149.66h2.02v2.82h-2.02zM257.02,152.42h2.02v2.82h-2.02zM257.02,155.18h2.02v2.82h-2.02zM257.02,157.94h2.02v2.82h-2.02zM257.02,160.7h2.02v2.82h-2.02zM255.06,163.46h2.02v2.82h-2.02zM257.02,163.46h2.02v2.82h-2.02zM258.98,163.46h2.02v2.82h-2.02zM270.06,160.7h2.02v2.82h-2.02zM272.02,160.7h2.02v2.82h-2.02zM270.06,163.46h2.02v2.82h-2.02zM272.02,163.46h2.02v2.82h-2.02zM287.02,146.9h2.02v2.82h-2.02zM285.06,149.66h2.02v2.82h-2.02zM287.02,149.66h2.02v2.82h-2.02zM287.02,152.42h2.02v2.82h-2.02zM287.02,155.18h2.02v2.82h-2.02zM287.02,157.94h2.02v2.82h-2.02zM287.02,160.7h2.02v2.82h-2.02zM285.06,163.46h2.02v2.82h-2.02zM287.02,163.46h2.02v2.82h-2.02zM288.98,163.46h2.02v2.82h-2.02z" fill="#0a0a05"/>
<line x1="148.3" y1="218.5" x2="148.3" y2="249.2" stroke="#a84c4c" stroke-width="2.2"/>
<rect x="137.1" y="225.4" width="5.8" height="6.6" fill="#3c3cff"/>
<text transform="translate(152.5,211.6) rotate(-90)" font-size="10.6" font-weight="bold" textLength="20" lengthAdjust="spacingAndGlyphs">VSS</text>
<text transform="translate(145.1,233.6) rotate(-90)" font-size="10.6" font-weight="bold" text-anchor="end" textLength="5.8" lengthAdjust="spacingAndGlyphs">1</text>
<line x1="163.3" y1="218.5" x2="163.3" y2="249.2" stroke="#a84c4c" stroke-width="2.2"/>
<rect x="152.1" y="225.4" width="5.8" height="6.6" fill="#ff3c3c"/>
<text transform="translate(167.5,211.6) rotate(-90)" font-size="10.6" font-weight="bold" textLength="19.5" lengthAdjust="spacingAndGlyphs">VDD</text>
<text transform="translate(160.1,233.6) rotate(-90)" font-size="10.6" font-weight="bold" text-anchor="end" textLength="5.8" lengthAdjust="spacingAndGlyphs">2</text>
<line x1="177.3" y1="218.5" x2="177.3" y2="249.2" stroke="#a84c4c" stroke-width="2.2"/>
<rect x="166.1" y="225.4" width="5.8" height="6.6" fill="#3c3cff"/>
<text transform="translate(181.5,211.6) rotate(-90)" font-size="10.6" font-weight="bold" textLength="20" lengthAdjust="spacingAndGlyphs">VEE</text>
<text transform="translate(174.1,233.6) rotate(-90)" font-size="10.6" font-weight="bold" text-anchor="end" textLength="5.8" lengthAdjust="spacingAndGlyphs">3</text>
<line x1="207.6" y1="218.5" x2="207.6" y2="249.2" stroke="#a84c4c" stroke-width="2.2"/>
<rect x="196.4" y="225.4" width="5.8" height="6.6" fill="#ff3c3c"/>
<text transform="translate(211.8,211.6) rotate(-90)" font-size="10.6" font-weight="bold" textLength="12.5" lengthAdjust="spacingAndGlyphs">RS</text>
<text transform="translate(204.4,233.6) rotate(-90)" font-size="10.6" font-weight="bold" text-anchor="end" textLength="5.8" lengthAdjust="spacingAndGlyphs">4</text>
<line x1="222.8" y1="218.5" x2="222.8" y2="249.2" stroke="#a84c4c" stroke-width="2.2"/>
<rect x="211.6" y="225.4" width="5.8" height="6.6" fill="#3c3cff"/>
<text transform="translate(227,211.6) rotate(-90)" font-size="10.6" font-weight="bold" textLength="16" lengthAdjust="spacingAndGlyphs">RW</text>
<text transform="translate(219.6,233.6) rotate(-90)" font-size="10.6" font-weight="bold" text-anchor="end" textLength="5.8" lengthAdjust="spacingAndGlyphs">5</text>
<line x1="238.3" y1="218.5" x2="238.3" y2="249.2" stroke="#a84c4c" stroke-width="2.2"/>
<rect x="227.1" y="225.4" width="5.8" height="6.6" fill="#3c3cff"/>
<text transform="translate(242.5,211.6) rotate(-90)" font-size="10.6" font-weight="bold" textLength="6" lengthAdjust="spacingAndGlyphs">E</text>
<text transform="translate(235.1,233.6) rotate(-90)" font-size="10.6" font-weight="bold" text-anchor="end" textLength="5.8" lengthAdjust="spacingAndGlyphs">6</text>
<line x1="268.9" y1="218.5" x2="268.9" y2="249.2" stroke="#a84c4c" stroke-width="2.2"/>
<rect x="257.7" y="225.4" width="5.8" height="6.6" fill="#3c3cff"/>
<text transform="translate(273.1,211.6) rotate(-90)" font-size="10.6" font-weight="bold" textLength="9.5" lengthAdjust="spacingAndGlyphs">D0</text>
<text transform="translate(265.7,233.6) rotate(-90)" font-size="10.6" font-weight="bold" text-anchor="end" textLength="5.8" lengthAdjust="spacingAndGlyphs">7</text>
<line x1="283.8" y1="218.5" x2="283.8" y2="249.2" stroke="#a84c4c" stroke-width="2.2"/>
<rect x="272.6" y="225.4" width="5.8" height="6.6" fill="#3c3cff"/>
<text transform="translate(288,211.6) rotate(-90)" font-size="10.6" font-weight="bold" textLength="9.5" lengthAdjust="spacingAndGlyphs">D1</text>
<text transform="translate(280.6,233.6) rotate(-90)" font-size="10.6" font-weight="bold" text-anchor="end" textLength="5.8" lengthAdjust="spacingAndGlyphs">8</text>
<line x1="299" y1="218.5" x2="299" y2="249.2" stroke="#a84c4c" stroke-width="2.2"/>
<rect x="287.8" y="225.4" width="5.8" height="6.6" fill="#3c3cff"/>
<text transform="translate(303.2,211.6) rotate(-90)" font-size="10.6" font-weight="bold" textLength="9.5" lengthAdjust="spacingAndGlyphs">D2</text>
<text transform="translate(295.8,233.6) rotate(-90)" font-size="10.6" font-weight="bold" text-anchor="end" textLength="5.8" lengthAdjust="spacingAndGlyphs">9</text>
<line x1="314.6" y1="218.5" x2="314.6" y2="249.2" stroke="#a84c4c" stroke-width="2.2"/>
<rect x="303.4" y="225.4" width="5.8" height="6.6" fill="#3c3cff"/>
<text transform="translate(318.8,211.6) rotate(-90)" font-size="10.6" font-weight="bold" textLength="9.5" lengthAdjust="spacingAndGlyphs">D3</text>
<text transform="translate(311.4,233.6) rotate(-90)" font-size="10.6" font-weight="bold" text-anchor="end" textLength="11.5" lengthAdjust="spacingAndGlyphs">10</text>
<line x1="328.4" y1="218.5" x2="328.4" y2="249.2" stroke="#a84c4c" stroke-width="2.2"/>
<rect x="317.2" y="225.4" width="5.8" height="6.6" fill="#3c3cff"/>
<text transform="translate(332.6,211.6) rotate(-90)" font-size="10.6" font-weight="bold" textLength="9.5" lengthAdjust="spacingAndGlyphs">D4</text>
<text transform="translate(325.2,233.6) rotate(-90)" font-size="10.6" font-weight="bold" text-anchor="end" textLength="11.5" lengthAdjust="spacingAndGlyphs">11</text>
<line x1="343.4" y1="218.5" x2="343.4" y2="249.2" stroke="#a84c4c" stroke-width="2.2"/>
<rect x="332.2" y="225.4" width="5.8" height="6.6" fill="#3c3cff"/>
<text transform="translate(347.6,211.6) rotate(-90)" font-size="10.6" font-weight="bold" textLength="9.5" lengthAdjust="spacingAndGlyphs">D5</text>
<text transform="translate(340.2,233.6) rotate(-90)" font-size="10.6" font-weight="bold" text-anchor="end" textLength="11.5" lengthAdjust="spacingAndGlyphs">12</text>
<line x1="358.5" y1="218.5" x2="358.5" y2="249.2" stroke="#a84c4c" stroke-width="2.2"/>
<rect x="347.3" y="225.4" width="5.8" height="6.6" fill="#3c3cff"/>
<text transform="translate(362.7,211.6) rotate(-90)" font-size="10.6" font-weight="bold" textLength="9.5" lengthAdjust="spacingAndGlyphs">D6</text>
<text transform="translate(355.3,233.6) rotate(-90)" font-size="10.6" font-weight="bold" text-anchor="end" textLength="11.5" lengthAdjust="spacingAndGlyphs">13</text>
<line x1="373.8" y1="218.5" x2="373.8" y2="249.2" stroke="#a84c4c" stroke-width="2.2"/>
<rect x="362.6" y="225.4" width="5.8" height="6.6" fill="#3c3cff"/>
<text transform="translate(378,211.6) rotate(-90)" font-size="10.6" font-weight="bold" textLength="9.5" lengthAdjust="spacingAndGlyphs">D7</text>
<text transform="translate(370.6,233.6) rotate(-90)" font-size="10.6" font-weight="bold" text-anchor="end" textLength="11.5" lengthAdjust="spacingAndGlyphs">14</text>
<rect x="524.9" y="384.7" width="331.2" height="255.5" fill="#cdccb3" stroke="#a43030" stroke-width="2.2"/>
<line x1="494.7" y1="399.8" x2="524.9" y2="399.8" stroke="#a84c4c" stroke-width="2.1"/>
<rect x="512.7" y="388.8" width="5.4" height="7" fill="#3c3cff"/>
<text transform="translate(510.2,396.8) scale(0.86,1)" font-size="10.6" font-weight="bold" fill="#000" text-anchor="end" textLength="7.09" lengthAdjust="spacing">2</text>
<text transform="translate(534.6,403.7) scale(0.86,1)" font-size="10.6" font-weight="bold" fill="#000" text-anchor="start" textLength="113.6" lengthAdjust="spacing">PD0/RXD/PCINT16</text>
<line x1="494.7" y1="415" x2="524.9" y2="415" stroke="#a84c4c" stroke-width="2.1"/>
<rect x="512.7" y="404" width="5.4" height="7" fill="#ff3c3c"/>
<text transform="translate(510.2,412) scale(0.86,1)" font-size="10.6" font-weight="bold" fill="#000" text-anchor="end" textLength="7.09" lengthAdjust="spacing">3</text>
<text transform="translate(534.6,418.9) scale(0.86,1)" font-size="10.6" font-weight="bold" fill="#000" text-anchor="start" textLength="110.81" lengthAdjust="spacing">PD1/TXD/PCINT17</text>
<line x1="494.7" y1="430.4" x2="524.9" y2="430.4" stroke="#a84c4c" stroke-width="2.1"/>
<rect x="512.7" y="419.4" width="5.4" height="7" fill="#808080"/>
<text transform="translate(510.2,427.4) scale(0.86,1)" font-size="10.6" font-weight="bold" fill="#000" text-anchor="end" textLength="7.09" lengthAdjust="spacing">4</text>
<text transform="translate(534.6,434.3) scale(0.86,1)" font-size="10.6" font-weight="bold" fill="#000" text-anchor="start" textLength="113.6" lengthAdjust="spacing">PD2/INT0/PCINT18</text>
<line x1="494.7" y1="445.6" x2="524.9" y2="445.6" stroke="#a84c4c" stroke-width="2.1"/>
<rect x="512.7" y="434.6" width="5.4" height="7" fill="#ff3c3c"/>
<text transform="translate(510.2,442.6) scale(0.86,1)" font-size="10.6" font-weight="bold" fill="#000" text-anchor="end" textLength="7.09" lengthAdjust="spacing">5</text>
<text transform="translate(534.6,449.5) scale(0.86,1)" font-size="10.6" font-weight="bold" fill="#000" text-anchor="start" textLength="153.95" lengthAdjust="spacing">PD3/INT1/OC2B/PCINT19</text>
<line x1="494.7" y1="460.5" x2="524.9" y2="460.5" stroke="#a84c4c" stroke-width="2.1"/>
<rect x="512.7" y="449.5" width="5.4" height="7" fill="#3c3cff"/>
<text transform="translate(510.2,457.5) scale(0.86,1)" font-size="10.6" font-weight="bold" fill="#000" text-anchor="end" textLength="7.09" lengthAdjust="spacing">6</text>
<text transform="translate(534.6,464.4) scale(0.86,1)" font-size="10.6" font-weight="bold" fill="#000" text-anchor="start" textLength="131.05" lengthAdjust="spacing">PD4/T0/XCK/PCINT20</text>
<line x1="494.7" y1="475.7" x2="524.9" y2="475.7" stroke="#a84c4c" stroke-width="2.1"/>
<rect x="512.7" y="464.7" width="5.4" height="7" fill="#3c3cff"/>
<text transform="translate(510.2,472.7) scale(0.86,1)" font-size="10.6" font-weight="bold" fill="#000" text-anchor="end" textLength="13.37" lengthAdjust="spacing">11</text>
<text transform="translate(534.6,479.6) scale(0.86,1)" font-size="10.6" font-weight="bold" fill="#000" text-anchor="start" textLength="138.02" lengthAdjust="spacing">PD5/T1/OC0B/PCINT21</text>
<line x1="494.7" y1="489.7" x2="524.9" y2="489.7" stroke="#a84c4c" stroke-width="2.1"/>
<rect x="512.7" y="478.7" width="5.4" height="7" fill="#3c3cff"/>
<text transform="translate(510.2,486.7) scale(0.86,1)" font-size="10.6" font-weight="bold" fill="#000" text-anchor="end" textLength="13.37" lengthAdjust="spacing">12</text>
<text transform="translate(534.6,493.6) scale(0.86,1)" font-size="10.6" font-weight="bold" fill="#000" text-anchor="start" textLength="153.95" lengthAdjust="spacing">PD6/AIN0/OC0A/PCINT22</text>
<line x1="494.7" y1="504" x2="524.9" y2="504" stroke="#a84c4c" stroke-width="2.1"/>
<rect x="512.7" y="493" width="5.4" height="7" fill="#3c3cff"/>
<text transform="translate(510.2,501) scale(0.86,1)" font-size="10.6" font-weight="bold" fill="#000" text-anchor="end" textLength="13.37" lengthAdjust="spacing">13</text>
<text transform="translate(534.6,507.9) scale(0.86,1)" font-size="10.6" font-weight="bold" fill="#000" text-anchor="start" textLength="113.6" lengthAdjust="spacing">PD7/AIN1/PCINT23</text>
<line x1="494.7" y1="534.2" x2="524.9" y2="534.2" stroke="#a84c4c" stroke-width="2.1"/>
<text transform="translate(508.5,531.2) scale(0.86,1)" font-size="10.6" font-weight="bold" fill="#000" text-anchor="end" textLength="13.37" lengthAdjust="spacing">21</text>
<text transform="translate(534.6,538.1) scale(0.86,1)" font-size="10.6" font-weight="bold" fill="#000" text-anchor="start" textLength="31.74" lengthAdjust="spacing">AREF</text>
<line x1="494.7" y1="549.2" x2="524.9" y2="549.2" stroke="#a84c4c" stroke-width="2.1"/>
<text transform="translate(508.5,546.2) scale(0.86,1)" font-size="10.6" font-weight="bold" fill="#000" text-anchor="end" textLength="13.37" lengthAdjust="spacing">20</text>
<text transform="translate(534.6,553.1) scale(0.86,1)" font-size="10.6" font-weight="bold" fill="#000" text-anchor="start" textLength="33.26" lengthAdjust="spacing">AVCC</text>
<line x1="856.1" y1="399.6" x2="886.6" y2="399.6" stroke="#a84c4c" stroke-width="2.1"/>
<rect x="863.3" y="389.2" width="5.3" height="5.8" fill="#3c3cff"/>
<text transform="translate(871.4,396.6) scale(0.86,1)" font-size="10.6" font-weight="bold" fill="#000" text-anchor="start" textLength="13.72" lengthAdjust="spacing">14</text>
<text transform="translate(848.6,403.5) scale(0.86,1)" font-size="10.6" font-weight="bold" fill="#000" text-anchor="end" textLength="146.63" lengthAdjust="spacing">PB0/ICP1/CLKO/PCINT0</text>
<line x1="856.1" y1="415" x2="886.6" y2="415" stroke="#a84c4c" stroke-width="2.1"/>
<rect x="863.3" y="404.6" width="5.3" height="5.8" fill="#ff3c3c"/>
<text transform="translate(871.4,412) scale(0.86,1)" font-size="10.6" font-weight="bold" fill="#000" text-anchor="start" textLength="13.72" lengthAdjust="spacing">15</text>
<text transform="translate(848.6,418.9) scale(0.86,1)" font-size="10.6" font-weight="bold" fill="#000" text-anchor="end" textLength="112.91" lengthAdjust="spacing">PB1/OC1A/PCINT1</text>
<line x1="856.1" y1="430.2" x2="886.6" y2="430.2" stroke="#a84c4c" stroke-width="2.1"/>
<rect x="863.3" y="419.8" width="5.3" height="5.8" fill="#ff3c3c"/>
<text transform="translate(871.4,427.2) scale(0.86,1)" font-size="10.6" font-weight="bold" fill="#000" text-anchor="start" textLength="13.72" lengthAdjust="spacing">16</text>
<text transform="translate(848.6,434.1) scale(0.86,1)" font-size="10.6" font-weight="bold" fill="#000" text-anchor="end" textLength="133.95" lengthAdjust="spacing">PB2/SS/OC1B/PCINT2</text>
<line x1="856.1" y1="445.4" x2="886.6" y2="445.4" stroke="#a84c4c" stroke-width="2.1"/>
<rect x="863.3" y="435" width="5.3" height="5.8" fill="#ff3c3c"/>
<text transform="translate(871.4,442.4) scale(0.86,1)" font-size="10.6" font-weight="bold" fill="#000" text-anchor="start" textLength="13.72" lengthAdjust="spacing">17</text>
<text transform="translate(848.6,449.3) scale(0.86,1)" font-size="10.6" font-weight="bold" fill="#000" text-anchor="end" textLength="150" lengthAdjust="spacing">PB3/MOSI/OC2A/PCINT3</text>
<line x1="856.1" y1="461" x2="886.6" y2="461" stroke="#a84c4c" stroke-width="2.1"/>
<rect x="863.3" y="450.6" width="5.3" height="5.8" fill="#3c3cff"/>
<text transform="translate(871.4,458) scale(0.86,1)" font-size="10.6" font-weight="bold" fill="#000" text-anchor="start" textLength="13.72" lengthAdjust="spacing">18</text>
<text transform="translate(848.6,464.9) scale(0.86,1)" font-size="10.6" font-weight="bold" fill="#000" text-anchor="end" textLength="111.63" lengthAdjust="spacing">PB4/MISO/PCINT4</text>
<line x1="856.1" y1="476" x2="886.6" y2="476" stroke="#a84c4c" stroke-width="2.1"/>
<rect x="863.3" y="465.6" width="5.3" height="5.8" fill="#3c3cff"/>
<text transform="translate(871.4,473) scale(0.86,1)" font-size="10.6" font-weight="bold" fill="#000" text-anchor="start" textLength="13.72" lengthAdjust="spacing">19</text>
<text transform="translate(848.6,479.9) scale(0.86,1)" font-size="10.6" font-weight="bold" fill="#000" text-anchor="end" textLength="104.65" lengthAdjust="spacing">PB5/SCK/PCINT5</text>
<line x1="856.1" y1="489.6" x2="886.6" y2="489.6" stroke="#a84c4c" stroke-width="2.1"/>
<rect x="863.3" y="479.2" width="5.3" height="5.8" fill="#ff3c3c"/>
<text transform="translate(871.4,486.6) scale(0.86,1)" font-size="10.6" font-weight="bold" fill="#000" text-anchor="start" textLength="7.09" lengthAdjust="spacing">9</text>
<text transform="translate(848.6,493.5) scale(0.86,1)" font-size="10.6" font-weight="bold" fill="#000" text-anchor="end" textLength="164.07" lengthAdjust="spacing">PB6/TOSC1/XTAL1/PCINT6</text>
<line x1="856.1" y1="503.6" x2="886.6" y2="503.6" stroke="#a84c4c" stroke-width="2.1"/>
<rect x="863.3" y="493.2" width="5.3" height="5.8" fill="#3c3cff"/>
<text transform="translate(871.4,500.6) scale(0.86,1)" font-size="10.6" font-weight="bold" fill="#000" text-anchor="start" textLength="13.72" lengthAdjust="spacing">10</text>
<text transform="translate(848.6,507.5) scale(0.86,1)" font-size="10.6" font-weight="bold" fill="#000" text-anchor="end" textLength="164.07" lengthAdjust="spacing">PB7/TOSC2/XTAL2/PCINT7</text>
<line x1="856.1" y1="533.8" x2="886.6" y2="533.8" stroke="#a84c4c" stroke-width="2.1"/>
<rect x="863.3" y="523.4" width="5.3" height="5.8" fill="#808080"/>
<text transform="translate(871.4,530.8) scale(0.86,1)" font-size="10.6" font-weight="bold" fill="#000" text-anchor="start" textLength="13.72" lengthAdjust="spacing">23</text>
<text transform="translate(848.6,537.7) scale(0.86,1)" font-size="10.6" font-weight="bold" fill="#000" text-anchor="end" textLength="112.44" lengthAdjust="spacing">PC0/ADC0/PCINT8</text>
<line x1="856.1" y1="549.5" x2="886.6" y2="549.5" stroke="#a84c4c" stroke-width="2.1"/>
<rect x="863.3" y="539.1" width="5.3" height="5.8" fill="#3c3cff"/>
<text transform="translate(871.4,546.5) scale(0.86,1)" font-size="10.6" font-weight="bold" fill="#000" text-anchor="start" textLength="13.72" lengthAdjust="spacing">24</text>
<text transform="translate(848.6,553.4) scale(0.86,1)" font-size="10.6" font-weight="bold" fill="#000" text-anchor="end" textLength="112.44" lengthAdjust="spacing">PC1/ADC1/PCINT9</text>
<line x1="856.1" y1="564.7" x2="886.6" y2="564.7" stroke="#a84c4c" stroke-width="2.1"/>
<rect x="863.3" y="554.3" width="5.3" height="5.8" fill="#808080"/>
<text transform="translate(871.4,561.7) scale(0.86,1)" font-size="10.6" font-weight="bold" fill="#000" text-anchor="start" textLength="13.72" lengthAdjust="spacing">25</text>
<text transform="translate(848.6,568.6) scale(0.86,1)" font-size="10.6" font-weight="bold" fill="#000" text-anchor="end" textLength="120.35" lengthAdjust="spacing">PC2/ADC2/PCINT10</text>
<line x1="856.1" y1="579.6" x2="886.6" y2="579.6" stroke="#a84c4c" stroke-width="2.1"/>
<rect x="863.3" y="569.2" width="5.3" height="5.8" fill="#ff3c3c"/>
<text transform="translate(871.4,576.6) scale(0.86,1)" font-size="10.6" font-weight="bold" fill="#000" text-anchor="start" textLength="13.72" lengthAdjust="spacing">26</text>
<text transform="translate(848.6,583.5) scale(0.86,1)" font-size="10.6" font-weight="bold" fill="#000" text-anchor="end" textLength="120.35" lengthAdjust="spacing">PC3/ADC3/PCINT11</text>
<line x1="856.1" y1="594.8" x2="886.6" y2="594.8" stroke="#a84c4c" stroke-width="2.1"/>
<rect x="863.3" y="584.4" width="5.3" height="5.8" fill="#808080"/>
<text transform="translate(871.4,591.8) scale(0.86,1)" font-size="10.6" font-weight="bold" fill="#000" text-anchor="start" textLength="13.72" lengthAdjust="spacing">27</text>
<text transform="translate(848.6,598.7) scale(0.86,1)" font-size="10.6" font-weight="bold" fill="#000" text-anchor="end" textLength="150.7" lengthAdjust="spacing">PC4/ADC4/SDA/PCINT12</text>
<line x1="856.1" y1="610.3" x2="886.6" y2="610.3" stroke="#a84c4c" stroke-width="2.1"/>
<rect x="863.3" y="599.9" width="5.3" height="5.8" fill="#808080"/>
<text transform="translate(871.4,607.3) scale(0.86,1)" font-size="10.6" font-weight="bold" fill="#000" text-anchor="start" textLength="13.72" lengthAdjust="spacing">28</text>
<text transform="translate(848.6,614.2) scale(0.86,1)" font-size="10.6" font-weight="bold" fill="#000" text-anchor="end" textLength="149.19" lengthAdjust="spacing">PC5/ADC5/SCL/PCINT13</text>
<line x1="856.1" y1="625.4" x2="886.6" y2="625.4" stroke="#a84c4c" stroke-width="2.1"/>
<rect x="863.3" y="615" width="5.3" height="5.8" fill="#ff3c3c"/>
<text transform="translate(871.4,622.4) scale(0.86,1)" font-size="10.6" font-weight="bold" fill="#000" text-anchor="start" textLength="7.09" lengthAdjust="spacing">1</text>
<text transform="translate(848.6,629.3) scale(0.86,1)" font-size="10.6" font-weight="bold" fill="#000" text-anchor="end" textLength="128.14" lengthAdjust="spacing">PC6/RESET/PCINT14</text>
<line x1="758" y1="423.8" x2="773" y2="423.8" stroke="#000" stroke-width="1"/>
<line x1="761.5" y1="618.6" x2="800.5" y2="618.6" stroke="#000" stroke-width="1"/>
<defs>
<filter id="shd" x="-5%" y="-20%" width="110%" height="140%"><feGaussianBlur stdDeviation="3"/></filter>
<linearGradient id="ttl" x1="0" y1="0" x2="1" y2="0">
 <stop offset="0" stop-color="#d6d6d2"/><stop offset="0.22" stop-color="#d2d2ce"/><stop offset="0.265" stop-color="#b2b2ac"/><stop offset="0.32" stop-color="#a4a49e"/>
 <stop offset="0.38" stop-color="#acaca6"/><stop offset="0.47" stop-color="#a0a09a"/><stop offset="0.53" stop-color="#aeaea8"/><stop offset="0.62" stop-color="#b0b0aa"/>
 <stop offset="0.7" stop-color="#a6a6a0"/><stop offset="0.85" stop-color="#b8b8b2"/><stop offset="1" stop-color="#c6c6c2"/>
</linearGradient>
<linearGradient id="ttlv" x1="0" y1="0" x2="0" y2="1">
 <stop offset="0" stop-color="#ffffff" stop-opacity="0.18"/><stop offset="0.5" stop-color="#ffffff" stop-opacity="0"/><stop offset="1" stop-color="#000000" stop-opacity="0.04"/>
</linearGradient>
<radialGradient id="ttxt" cx="0.5" cy="0.5" r="0.5"><stop offset="0" stop-color="#e6e6e4" stop-opacity="0.9"/><stop offset="0.7" stop-color="#e0e0de" stop-opacity="0.6"/><stop offset="1" stop-color="#e0e0de" stop-opacity="0"/></radialGradient>
<linearGradient id="pnl" x1="0" y1="0" x2="0" y2="1"><stop offset="0" stop-color="#d0d0d0"/><stop offset="1" stop-color="#c9c9c9"/></linearGradient>
<radialGradient id="kb" cx="0.5" cy="0.5" r="0.52" fx="0.24" fy="0.24">
 <stop offset="0" stop-color="#ffffff"/><stop offset="0.12" stop-color="#f0f0f8"/><stop offset="0.45" stop-color="#b4b4d2"/><stop offset="0.8" stop-color="#8a8ab8"/><stop offset="1" stop-color="#7070a2"/>
</radialGradient>
<radialGradient id="kr" cx="0.5" cy="0.5" r="0.52" fx="0.24" fy="0.24">
 <stop offset="0" stop-color="#ffffff"/><stop offset="0.12" stop-color="#ffeaea"/><stop offset="0.45" stop-color="#ffa4a4"/><stop offset="0.8" stop-color="#ff6060"/><stop offset="1" stop-color="#f04444"/>
</radialGradient>
<radialGradient id="ledoff" cx="0.5" cy="0.5" r="0.5" fx="0.35" fy="0.3"><stop offset="0" stop-color="#2a7a2a"/><stop offset="0.5" stop-color="#0d4a0d"/><stop offset="1" stop-color="#063006"/></radialGradient>
<radialGradient id="ledon" cx="0.5" cy="0.5" r="0.5" fx="0.38" fy="0.3"><stop offset="0" stop-color="#b0ffb0"/><stop offset="0.45" stop-color="#30ee30"/><stop offset="1" stop-color="#10b010"/></radialGradient>
<linearGradient id="cls" x1="0" y1="0" x2="0" y2="1"><stop offset="0" stop-color="#f0b0a0"/><stop offset="0.45" stop-color="#e07050"/><stop offset="0.6" stop-color="#c84020"/><stop offset="1" stop-color="#e89080"/></linearGradient>
</defs>
<rect x="195" y="724" width="729" height="219" fill="#000" opacity="0.5" filter="url(#shd)"/><rect x="914" y="727" width="9" height="212" fill="#000" opacity="0.35" filter="url(#shd)"/>
<rect x="198.5" y="728.4" width="720.5" height="209.7" fill="url(#ttl)" stroke="#141414" stroke-width="1.3"/>
<rect x="198.5" y="728.4" width="720.5" height="33" fill="url(#ttlv)"/>
<rect x="200" y="729.9" width="717.5" height="206.7" fill="none" stroke="#f4f4f4" stroke-width="1.3"/>
<rect x="202" y="931.5" width="714" height="4" fill="#b8b8b4"/>
<ellipse cx="290" cy="745" rx="98" ry="17" fill="url(#ttxt)"/>
<text x="209.6" y="751" font-size="16.2" fill="#0a1226" stroke="#0a1226" stroke-width="0.3" textLength="162" lengthAdjust="spacingAndGlyphs">VSM Signal Generator</text>
<rect x="888.8" y="735.6" width="21.6" height="22" rx="2" fill="url(#cls)" stroke="#4a3a36" stroke-width="1.1"/>
<rect x="890.3" y="736.9" width="19" height="19.6" rx="2" fill="none" stroke="#ffd0c0" stroke-width="0.8" opacity="0.7"/>
<path d="M897.3,743.8 L902.3,749.5 M902.3,743.8 L897.3,749.5" stroke="#3a4a6a" stroke-width="3.2" stroke-linecap="round"/>
<path d="M897.3,743.8 L902.3,749.5 M902.3,743.8 L897.3,749.5" stroke="#ffffff" stroke-width="1.8" stroke-linecap="round"/>
<rect x="204.9" y="760.3" width="707.2" height="171" fill="none" stroke="#f6f6f6" stroke-width="1.2"/>
<rect x="205.9" y="761.6" width="705.3" height="167.8" fill="url(#pnl)" stroke="#0e0e0e" stroke-width="1.6"/>
<rect x="207.6" y="763.3" width="701.9" height="164.3" fill="none" stroke="#fafafa" stroke-width="1.3"/>
<polygon points="219.5,798.9 235.7,782.6 337.7,782.6 353.9,798.8 353.9,902.4 340.4,916.1 319.5,916.1 319.5,893 330.3,882.8 330.3,812.8 324.3,805.4 250.5,805.4 242.9,812.8 242.9,882.8 254,893.6 267.5,893.6 267.5,916.1 238.5,916.1 219.5,897.6" fill="#e7e7e7" stroke="#0c0c0c" stroke-width="2" stroke-linejoin="miter"/>
<polygon points="510.3,798.9 526.5,782.6 628.5,782.6 644.7,798.8 644.7,902.4 631.2,916.1 610.3,916.1 610.3,893 621.1,882.8 621.1,812.8 615.1,805.4 541.3,805.4 533.7,812.8 533.7,882.8 544.8,893.6 558.3,893.6 558.3,916.1 529.3,916.1 510.3,897.6" fill="#e7e7e7" stroke="#0c0c0c" stroke-width="2" stroke-linejoin="miter"/>
<polygon points="364.6,798.8 381.2,782.8 395.5,782.8 395.5,806.4 388.8,812.7 388.8,878.1 364.6,878.1" fill="#e7e7e7" stroke="#0c0c0c" stroke-width="2" stroke-linejoin="miter"/>
<polygon points="399.7,782.8 482.4,782.8 499.3,798.8 499.3,818.2 475.7,818.2 475.7,812.3 468.9,805.6 399.7,805.6" fill="#e7e7e7" stroke="#0c0c0c" stroke-width="2" stroke-linejoin="miter"/>
<polygon points="475.7,822.4 499.3,822.4 499.3,878.1 475.7,878.1" fill="#e7e7e7" stroke="#0c0c0c" stroke-width="2" stroke-linejoin="miter"/>
<polygon points="655.5,800.1 672.8,782.7 721.3,782.7 721.3,805.8 685.2,805.8 679.6,810.9 679.6,853.1 655.5,853.1" fill="#e7e7e7" stroke="#0c0c0c" stroke-width="2" stroke-linejoin="miter"/>
<polygon points="790.5,799.6 774.1,782.7 724.8,782.7 724.8,805.8 761.5,805.8 766.5,810.9 766.5,853.1 790.5,853.1" fill="#e7e7e7" stroke="#0c0c0c" stroke-width="2" stroke-linejoin="miter"/>
<text x="254" y="910.3" font-size="11.5" fill="#1c1c1c" stroke="#1c1c1c" stroke-width="0.25" text-anchor="middle">0</text>
<text x="231.7" y="893.4" font-size="11.5" fill="#1c1c1c" stroke="#1c1c1c" stroke-width="0.25" text-anchor="middle">1</text>
<text x="231.7" y="865.8" font-size="11.5" fill="#1c1c1c" stroke="#1c1c1c" stroke-width="0.25" text-anchor="middle">2</text>
<text x="231.7" y="842.1" font-size="11.5" fill="#1c1c1c" stroke="#1c1c1c" stroke-width="0.25" text-anchor="middle">3</text>
<text x="231.5" y="816" font-size="11.5" fill="#1c1c1c" stroke="#1c1c1c" stroke-width="0.25" text-anchor="middle">4</text>
<text x="254" y="798" font-size="11.5" fill="#1c1c1c" stroke="#1c1c1c" stroke-width="0.25" text-anchor="middle">5</text>
<text x="280" y="798" font-size="11.5" fill="#1c1c1c" stroke="#1c1c1c" stroke-width="0.25" text-anchor="middle">6</text>
<text x="308.5" y="798" font-size="11.5" fill="#1c1c1c" stroke="#1c1c1c" stroke-width="0.25" text-anchor="middle">7</text>
<text x="335.5" y="801.9" font-size="11.5" fill="#1c1c1c" stroke="#1c1c1c" stroke-width="0.25" text-anchor="middle">8</text>
<text x="342.6" y="828.9" font-size="11.5" fill="#1c1c1c" stroke="#1c1c1c" stroke-width="0.25" text-anchor="middle">9</text>
<text x="342.5" y="854.3" font-size="11.5" fill="#1c1c1c" stroke="#1c1c1c" stroke-width="0.25" text-anchor="middle">10</text>
<text x="343" y="880.6" font-size="11.5" fill="#1c1c1c" stroke="#1c1c1c" stroke-width="0.25" text-anchor="middle">11</text>
<text x="334.3" y="906.3" font-size="11.5" fill="#1c1c1c" stroke="#1c1c1c" stroke-width="0.25" text-anchor="middle">12</text>
<text x="542.2" y="909.5" font-size="11.5" fill="#1c1c1c" stroke="#1c1c1c" stroke-width="0.25" text-anchor="middle">0</text>
<text x="522.5" y="889.3" font-size="11.5" fill="#1c1c1c" stroke="#1c1c1c" stroke-width="0.25" text-anchor="middle">1</text>
<text x="522.5" y="864.1" font-size="11.5" fill="#1c1c1c" stroke="#1c1c1c" stroke-width="0.25" text-anchor="middle">2</text>
<text x="522.5" y="839.5" font-size="11.5" fill="#1c1c1c" stroke="#1c1c1c" stroke-width="0.25" text-anchor="middle">3</text>
<text x="522.5" y="813.7" font-size="11.5" fill="#1c1c1c" stroke="#1c1c1c" stroke-width="0.25" text-anchor="middle">4</text>
<text x="543" y="797.9" font-size="11.5" fill="#1c1c1c" stroke="#1c1c1c" stroke-width="0.25" text-anchor="middle">5</text>
<text x="569.5" y="797.9" font-size="11.5" fill="#1c1c1c" stroke="#1c1c1c" stroke-width="0.25" text-anchor="middle">6</text>
<text x="597.4" y="797.9" font-size="11.5" fill="#1c1c1c" stroke="#1c1c1c" stroke-width="0.25" text-anchor="middle">7</text>
<text x="625" y="801.9" font-size="11.5" fill="#1c1c1c" stroke="#1c1c1c" stroke-width="0.25" text-anchor="middle">8</text>
<text x="632" y="827.4" font-size="11.5" fill="#1c1c1c" stroke="#1c1c1c" stroke-width="0.25" text-anchor="middle">9</text>
<text x="632" y="853.2" font-size="11.5" fill="#1c1c1c" stroke="#1c1c1c" stroke-width="0.25" text-anchor="middle">10</text>
<text x="632" y="880.4" font-size="11.5" fill="#1c1c1c" stroke="#1c1c1c" stroke-width="0.25" text-anchor="middle">11</text>
<text x="625" y="905.9" font-size="11.5" fill="#1c1c1c" stroke="#1c1c1c" stroke-width="0.25" text-anchor="middle">12</text>
<text x="287.7" y="817.9" font-size="12.4" fill="#2a2a2a" stroke="#2a2a2a" stroke-width="0.25" text-anchor="middle" font-style="italic">Centre</text>
<text x="577.6" y="818.3" font-size="12.4" fill="#2a2a2a" stroke="#2a2a2a" stroke-width="0.25" text-anchor="middle" font-style="italic">Level</text>
<text x="433.5" y="818" font-size="12.4" fill="#2a2a2a" stroke="#2a2a2a" stroke-width="0.25" text-anchor="middle" font-style="italic">Range</text>
<text x="723.5" y="818.3" font-size="12.4" fill="#2a2a2a" stroke="#2a2a2a" stroke-width="0.25" text-anchor="middle" font-style="italic">Range</text>
<text x="381.2" y="806.1" font-size="11.5" fill="#1c1c1c" stroke="#1c1c1c" stroke-width="0.25" text-anchor="middle">10</text>
<text x="376.1" y="842.4" font-size="11.5" fill="#1c1c1c" stroke="#1c1c1c" stroke-width="0.25" text-anchor="middle">1</text>
<text x="376.6" y="872.8" font-size="11.5" fill="#1c1c1c" stroke="#1c1c1c" stroke-width="0.25" text-anchor="middle">0.1</text>
<text x="414" y="798.5" font-size="11.5" fill="#1c1c1c" stroke="#1c1c1c" stroke-width="0.25" text-anchor="middle">0.1</text>
<text x="447" y="798.5" font-size="11.5" fill="#1c1c1c" stroke="#1c1c1c" stroke-width="0.25" text-anchor="middle">1</text>
<text x="480.7" y="805.3" font-size="11.5" fill="#1c1c1c" stroke="#1c1c1c" stroke-width="0.25" text-anchor="middle">10</text>
<text x="487.5" y="844.9" font-size="11.5" fill="#1c1c1c" stroke="#1c1c1c" stroke-width="0.25" text-anchor="middle">0.1</text>
<text x="487.5" y="870.2" font-size="11.5" fill="#1c1c1c" stroke="#1c1c1c" stroke-width="0.25" text-anchor="middle">1</text>
<text x="376.1" y="780.2" font-size="9.4" fill="#333" stroke="#333" stroke-width="0.25" text-anchor="middle">Hz</text>
<text x="488.3" y="780.2" font-size="9.4" fill="#333" stroke="#333" stroke-width="0.25" text-anchor="middle">KHz</text>
<text x="487.5" y="887.3" font-size="9.4" fill="#333" stroke="#333" stroke-width="0.25" text-anchor="middle">MHz</text>
<text x="667.2" y="780.5" font-size="9.4" fill="#333" stroke="#333" stroke-width="0.25" text-anchor="middle">mV</text>
<text x="779.2" y="780.5" font-size="9.4" fill="#333" stroke="#333" stroke-width="0.25" text-anchor="middle">V</text>
<text x="704" y="797.9" font-size="11.5" fill="#1c1c1c" stroke="#1c1c1c" stroke-width="0.25" text-anchor="middle">10</text>
<text x="742" y="797.9" font-size="11.5" fill="#1c1c1c" stroke="#1c1c1c" stroke-width="0.25" text-anchor="middle">0.1</text>
<text x="667" y="839.8" font-size="11.5" fill="#1c1c1c" stroke="#1c1c1c" stroke-width="0.25" text-anchor="middle">1</text>
<text x="778" y="838.1" font-size="11.5" fill="#1c1c1c" stroke="#1c1c1c" stroke-width="0.25" text-anchor="middle">1</text>
<text x="432.6" y="910.9" font-size="12.1" fill="#262626" stroke="#262626" stroke-width="0.25" text-anchor="middle">Frequency</text>
<text x="722.8" y="910.7" font-size="12.4" fill="#262626" stroke="#262626" stroke-width="0.25" text-anchor="middle">Amplitude</text>
<text x="876" y="827.3" font-size="12.2" fill="#262626" stroke="#262626" stroke-width="0.25" text-anchor="middle">Waveform</text>
<text x="877" y="909.4" font-size="12.2" fill="#262626" stroke="#262626" stroke-width="0.25" text-anchor="middle">Polarity</text>
<text x="825" y="876.7" font-size="11.4" fill="#222" stroke="#222" stroke-width="0.25">Uni</text>
<text x="825" y="896.8" font-size="11.4" fill="#222" stroke="#222" stroke-width="0.25">Bi</text>
<circle cx="288.6" cy="851.6" r="24.6" fill="#000" opacity="0.12" filter="url(#shd)"/>
<circle cx="288.7" cy="851.5" r="24.4" fill="#303030" opacity="0.55"/>
<circle cx="287.8" cy="850.4" r="24.3" fill="url(#kb)"/>
<line x1="287.8" y1="850.4" x2="304" y2="867.3" stroke="#2a2a2a" stroke-width="2.4" stroke-linecap="round"/>
<circle cx="433.8" cy="851.1" r="24.6" fill="#000" opacity="0.12" filter="url(#shd)"/>
<circle cx="433.9" cy="851" r="24.4" fill="#303030" opacity="0.55"/>
<circle cx="433" cy="849.9" r="24.3" fill="url(#kb)"/>
<line x1="433" y1="849.9" x2="414.9" y2="834.3" stroke="#2a2a2a" stroke-width="2.4" stroke-linecap="round"/>
<circle cx="579.6" cy="850.6" r="24.6" fill="#000" opacity="0.12" filter="url(#shd)"/>
<circle cx="579.7" cy="850.5" r="24.4" fill="#303030" opacity="0.55"/>
<circle cx="578.8" cy="849.4" r="24.3" fill="url(#kr)"/>
<line x1="578.8" y1="849.4" x2="595.7" y2="866.8" stroke="#2a2a2a" stroke-width="2.4" stroke-linecap="round"/>
<circle cx="725.1" cy="850.6" r="24.6" fill="#000" opacity="0.12" filter="url(#shd)"/>
<circle cx="725.2" cy="850.5" r="24.4" fill="#303030" opacity="0.55"/>
<circle cx="724.3" cy="849.4" r="24.3" fill="url(#kr)"/>
<line x1="724.3" y1="849.4" x2="747.1" y2="841.8" stroke="#2a2a2a" stroke-width="2.4" stroke-linecap="round"/>
<path d="M274.6,897 h38.3 l3,3 v11.5 l-3,3 h-38.3 l-3,-3 v-11.5 z" fill="#050505"/>
<text x="293.75" y="911.6" font-size="16" fill="#10f010" text-anchor="middle" textLength="24.3" lengthAdjust="spacingAndGlyphs">120</text>
<path d="M565,897 h38.8 l3,3 v11.5 l-3,3 h-38.8 l-3,-3 v-11.5 z" fill="#050505"/>
<text x="584.4" y="911.6" font-size="16" fill="#10f010" text-anchor="middle" textLength="28.5" lengthAdjust="spacingAndGlyphs">12.0</text>
<circle cx="806.8" cy="786.5" r="5" fill="url(#ledoff)"/>
<circle cx="806.8" cy="807.3" r="5" fill="url(#ledon)"/>
<circle cx="806.8" cy="827.9" r="5" fill="url(#ledoff)"/>
<circle cx="806.8" cy="848.7" r="5" fill="url(#ledoff)"/>
<circle cx="806.8" cy="872.3" r="5" fill="url(#ledoff)"/>
<circle cx="806.8" cy="893" r="5" fill="url(#ledon)"/>
<path d="M823,791.4 V782.6 H832 V791.4 H841 V782.6" fill="none" stroke="#000" stroke-width="1.6"/>
<path d="M823,810.6 V803.2 H826.4 L841,810.3" fill="none" stroke="#000" stroke-width="1.6"/>
<path d="M823,828.7 L827.7,823.6 L836.1,832.2 L840.9,827.7" fill="none" stroke="#000" stroke-width="1.6"/>
<path d="M823,847.7 C823.5,840.5 830,840.5 831.5,847.5 C833,855 840,855 840.9,847.7" fill="none" stroke="#000" stroke-width="1.8"/>
<rect x="862" y="783.1" width="27" height="27.3" fill="#828282" stroke="#0a0a0a" stroke-width="1.3"/>
<path d="M863.6,809.1 V784.7 H887.4" fill="none" stroke="#f0f0f0" stroke-width="1.3"/>
<rect x="862" y="869.3" width="27" height="27.3" fill="#828282" stroke="#0a0a0a" stroke-width="1.3"/>
<path d="M863.6,895.3 V870.9 H887.4" fill="none" stroke="#f0f0f0" stroke-width="1.3"/>
</svg></body></html>
